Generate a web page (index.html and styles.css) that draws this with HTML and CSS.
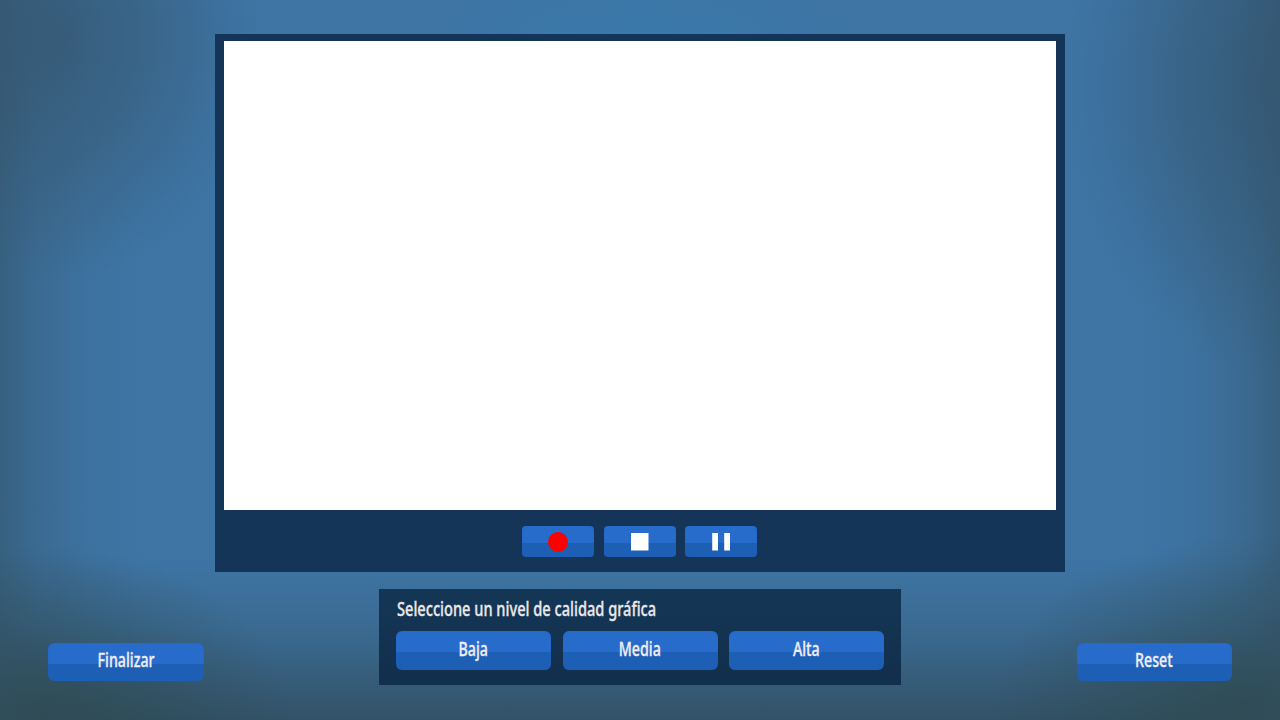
FILE: index.html
```html
<!DOCTYPE html>
<html lang="es">
<head>
<meta charset="utf-8">
<title>Calidad gráfica</title>
<link rel="stylesheet" href="styles.css">
</head>
<body>
<main class="app">
  <section class="player">
    <div class="screen"></div>
    <div class="controls">
      <button class="btn control" aria-label="Grabar"><svg width="20" height="20" viewBox="0 0 20 20"><circle cx="10" cy="10" r="10" fill="#f00"/></svg></button>
      <button class="btn control" aria-label="Detener"><svg width="20" height="20" viewBox="0 0 20 20"><path d="M1 1h17.5v17.5H1z" fill="#fff"/></svg></button>
      <button class="btn control" aria-label="Pausa"><svg width="20" height="20" viewBox="0 0 20 20"><path d="M1.2 1H7v17.5H1.2zM13.2 1H19v17.5h-5.8z" fill="#fff"/></svg></button>
    </div>
  </section>
  <footer class="bottom">
    <button class="btn action"><span class="label finish">Finalizar</span></button>
    <section class="quality">
      <h1 class="title"><span class="title-text">Seleccione un nivel de calidad gráfica</span></h1>
      <div class="levels">
        <button class="btn"><span class="label low">Baja</span></button>
        <button class="btn"><span class="label mid">Media</span></button>
        <button class="btn"><span class="label high">Alta</span></button>
      </div>
    </section>
    <button class="btn action"><span class="label reset">Reset</span></button>
  </footer>
</main>
</body>
</html>
```
FILE: styles.css
```css
* { box-sizing: border-box; }
body {
  margin: 0;
  font-family: "Noto Sans", "Open Sans", sans-serif;
}
.app {
  width: 1280px;
  height: 720px;
  overflow: hidden;
  padding-top: 34px;
  display: flex;
  flex-direction: column;
  align-items: center;
  background:
    radial-gradient(ellipse 200px 240px at 62px 38px, rgba(52, 82, 105, .65), rgba(52, 82, 105, .42) 45%, rgba(52, 82, 105, 0)),
    radial-gradient(ellipse 210px 290px at 1275px 85px, rgba(51, 83, 108, .7), rgba(51, 83, 108, .45) 45%, rgba(51, 83, 108, 0)),
    radial-gradient(ellipse 250px 170px at 40px 715px, rgba(45, 70, 74, .7), rgba(45, 70, 74, 0)),
    radial-gradient(ellipse 250px 170px at 1245px 705px, rgba(45, 70, 74, .7), rgba(45, 70, 74, 0)),
    radial-gradient(ellipse 220px 70px at 640px 35px, rgba(56, 122, 172, .7), rgba(56, 122, 172, 0)),
    linear-gradient(90deg, rgba(54, 91, 118, .8), rgba(54, 91, 118, .4) 3%, rgba(54, 91, 118, .12) 7%, rgba(54, 91, 118, 0) 11%, rgba(54, 91, 118, 0) 89%, rgba(54, 91, 118, .12) 93%, rgba(54, 91, 118, .4) 97%, rgba(54, 91, 118, .8)),
    linear-gradient(180deg, rgba(52, 83, 104, 0) 77%, rgba(52, 83, 104, .3) 87%, rgba(50, 80, 99, .95)),
    #3e75a5;
}
.player {
  width: 850px;
  height: 538px;
  padding: 7px 9px 15px;
  background: #143557;
}
.screen { height: 469px; background: #fff; }
.controls {
  margin-top: 16px;
  display: flex;
  justify-content: center;
  gap: 9.5px;
  padding-right: 1px;
}
.btn {
  width: 155px;
  height: 39px;
  border: 0;
  padding: 0 0 5px;
  border-radius: 6px;
  display: flex;
  align-items: center;
  justify-content: center;
  background: linear-gradient(#276bcb 0 55%, #1e5fb6 55%);
  box-shadow: inset 0 0 1px 0 rgba(29, 91, 182, .6);
  color: #efedf5;
  font: 500 19.5px/27px "Noto Sans", "Open Sans", sans-serif;
}
.control { width: 72px; height: 31px; padding: 0; border-radius: 4px; }
.control svg { display: block; }
.label, .title-text {
  display: inline-block;
  white-space: nowrap;
  transform: scaleX(.73);
  -webkit-text-stroke: .35px currentColor;
}
.bottom {
  width: 1184px;
  margin-top: 17px;
  display: flex;
  justify-content: space-between;
}
.action { width: 155.5px; margin-top: 53.5px; height: 38.5px; }
.quality {
  width: 522px;
  height: 96px;
  padding: 6px 17px 0;
  background: linear-gradient(#143655, #122f4d);
}
.title {
  margin: 0;
  padding-left: 1px;
  height: 36px;
  color: #e9e8ea;
  font: 500 20px/28px "Noto Sans", "Open Sans", sans-serif;
}
.title-text { transform-origin: left; }
.levels { display: flex; justify-content: space-between; }
```
